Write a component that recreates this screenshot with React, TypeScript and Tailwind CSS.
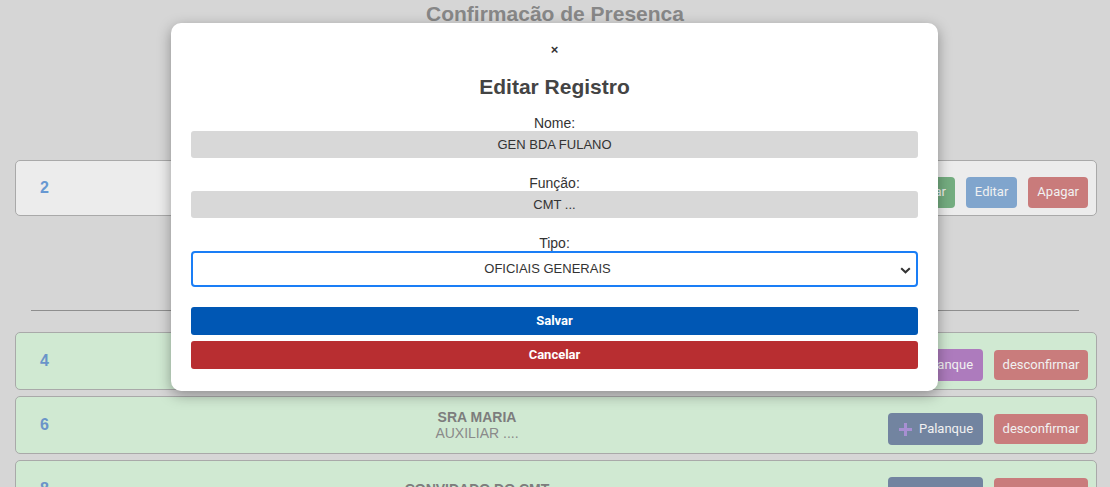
import React from "react";

const sans = { fontFamily: '"Liberation Sans", Arial, sans-serif' };

function PlusIcon({ color }: { color: string }) {
  return (
    <svg width="13" height="13" viewBox="0 0 13 13" className="shrink-0">
      <rect x="5" y="0" width="3" height="13" fill={color} />
      <rect x="0" y="5" width="13" height="3" fill={color} />
    </svg>
  );
}

function Btn({
  children,
  bg,
  h = "h-[30px]",
  w = "",
}: {
  children: React.ReactNode;
  bg: string;
  h?: string;
  w?: string;
}) {
  return (
    <button
      className={`${h} ${w} ${bg} flex items-center justify-center rounded-[4px] px-[9px] text-[13px] text-[#f1f1f1] font-[Roboto,sans-serif]`}
    >
      {children}
    </button>
  );
}

function PalanqueBtn({ bg }: { bg: string }) {
  return (
    <button
      className={`h-[32px] w-[95px] ${bg} flex items-center gap-[7px] rounded-[4px] pl-[11px] text-[13px] text-[#f1f1f1] font-[Roboto,sans-serif]`}
    >
      <PlusIcon color="#a78fd2" />
      Palanque
    </button>
  );
}

function Row({
  num,
  name,
  role,
  green,
  children,
}: {
  num: string;
  name: string;
  role?: string;
  green?: boolean;
  children: React.ReactNode;
}) {
  return (
    <div
      className={`ml-[15px] mr-[13px] flex items-center rounded-[5px] border border-[#a9a9a9] pl-[24px] pr-[8px] ${
        green ? "h-[58px] bg-[#d0e9d2]" : "h-[56px] bg-[#ececec]"
      }`}
    >
      <div
        className={`w-[36px] text-[16px] font-bold ${
          green ? "text-[#6a94c9]" : "text-[#6798d2]"
        }`}
      >
        {num}
      </div>
      <div className="flex-1 text-center leading-[16px]">
        <div className="text-[14px] font-bold text-[#7d7d7d]">{name}</div>
        {role && <div className="text-[14px] text-[#8a8a8a]">{role}</div>}
      </div>
      <div className="ml-[10px] mt-[8px] flex items-center gap-[11px]">
        {children}
      </div>
    </div>
  );
}

export default function App() {
  return (
    <div
      className="relative h-[487px] w-full overflow-hidden bg-[#d6d6d6]"
      style={sans}
    >
      <div className="mt-[2px] text-center text-[21px] font-bold leading-[24px] text-[#878787]">
        Confirmacão de Presenca
      </div>

      <div className="mt-[134px]">
        <Row num="2" name="GEN BDA FULANO" role="CMT ...">
          <Btn bg="bg-[#74ad80]" h="h-[31px]">
            Confirmar
          </Btn>
          <Btn bg="bg-[#80a5cd]" h="h-[31px]">
            Editar
          </Btn>
          <Btn bg="bg-[#c97b7b]" h="h-[31px]">
            Apagar
          </Btn>
        </Row>
      </div>

      <div className="mx-[31px] mt-[94px] border-t border-[#8e8e8e]" />

      <div className="mt-[21px] flex flex-col gap-[6px]">
        <Row num="4" name="CEL JOSE" role="CHEFE ...." green>
          <PalanqueBtn bg="bg-[#ad7bbd]" />
          <Btn bg="bg-[#c97c7c]" w="w-[94px]">
            desconfirmar
          </Btn>
        </Row>
        <Row num="6" name="SRA MARIA" role="AUXILIAR ...." green>
          <PalanqueBtn bg="bg-[#7284a0]" />
          <Btn bg="bg-[#c97c7c]" w="w-[94px]">
            desconfirmar
          </Btn>
        </Row>
        <Row num="8" name="CONVIDADO DO CMT" green>
          <PalanqueBtn bg="bg-[#7284a0]" />
          <Btn bg="bg-[#c97c7c]" w="w-[94px]">
            desconfirmar
          </Btn>
        </Row>
      </div>

      {/* Modal */}
      <div className="absolute inset-0 flex justify-center pr-[1px]">
        <div className="mt-[23px] h-fit w-[767px] rounded-[10px] bg-white px-[20px] pb-[22px] shadow-[0_4px_14px_rgba(0,0,0,0.35)]">
          <div className="mt-[19px] h-[16px] text-center text-[13px] font-bold leading-[16px] text-[#333]">
            ×
          </div>
          <h2 className="mt-[17px] text-center text-[21px] font-bold leading-[24px] text-[#444]">
            Editar Registro
          </h2>

          <div className="mt-[16px] text-center text-[14px] leading-[16px] text-[#333]">
            Nome:
          </div>
          <div className="flex h-[27px] items-center justify-center rounded-[3px] bg-[#d8d8d8] text-[13px] text-[#333]">
            GEN BDA FULANO
          </div>

          <div className="mt-[17px] text-center text-[14px] leading-[16px] text-[#333]">
            Função:
          </div>
          <div className="flex h-[27px] items-center justify-center rounded-[3px] bg-[#d8d8d8] text-[13px] text-[#333]">
            CMT ...
          </div>

          <div className="mt-[17px] text-center text-[14px] leading-[16px] text-[#333]">
            Tipo:
          </div>
          <div className="relative flex h-[36px] items-center justify-center rounded-[4px] border-2 border-[#1a7ef6] bg-white pr-[14px] text-[13px] text-[#333]">
            OFICIAIS GENERAIS
            <svg
              width="11"
              height="7"
              viewBox="0 0 11 7"
              className="absolute right-[5px] top-[14px]"
            >
              <path
                d="M1.2 1.2 L5.5 5.3 L9.8 1.2"
                fill="none"
                stroke="#333"
                strokeWidth="2"
              />
            </svg>
          </div>

          <button className="mt-[20px] block h-[28px] w-full rounded-[3px] bg-[#0057b4] text-[13px] font-bold text-white font-[Roboto,sans-serif]">
            Salvar
          </button>
          <button className="mt-[6px] block h-[28px] w-full rounded-[3px] bg-[#b82e31] text-[13px] font-bold text-white font-[Roboto,sans-serif]">
            Cancelar
          </button>
        </div>
      </div>
    </div>
  );
}
